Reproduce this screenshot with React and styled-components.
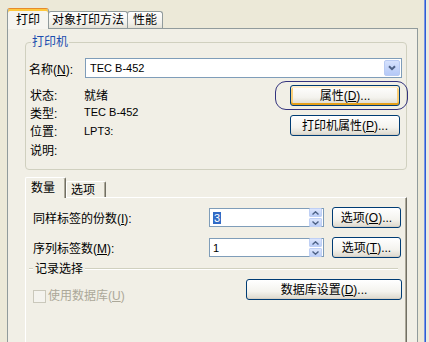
import { Fragment } from 'react';
import styled, { createGlobalStyle } from 'styled-components';

const GlobalStyle = createGlobalStyle`
  html, body {
    margin: 0;
    padding: 0;
  }
  body {
    width: 429px;
    height: 342px;
    overflow: hidden;
    background: #ECE9D8;
    font-family: "Liberation Sans", "Noto Sans CJK SC", sans-serif;
    font-size: 12px;
    color: #000;
  }
`;

const Window = styled.div`
  width: 429px;
  height: 342px;
  display: flex;
  background: #ECE9D8;
  overflow: hidden;
`;

const Dialog = styled.div`
  width: 424px;
  padding: 7px 6px 0 7px;
  box-sizing: border-box;
  display: flex;
  flex-direction: column;
`;

const WindowEdge = styled.div`
  flex: 1;
  border-left: 1px solid #7A96DF;
  background: linear-gradient(to right, #2E5DD7 0, #2E5DD7 1px, #EDEBE0 1px);
`;

const TabStrip = styled.div`
  display: flex;
  align-items: flex-end;
  height: 21px;
`;

const TopTab = styled.div`
  position: relative;
  z-index: ${p => (p.$active ? 2 : 1)};
  height: ${p => (p.$active ? 21 : 17)}px;
  margin-bottom: ${p => (p.$active ? -1 : 0)}px;
  padding: 0 ${p => p.$pad}px;
  box-sizing: border-box;
  border: 1px solid #919B9C;
  border-bottom: none;
  border-top-color: ${p => (p.$active ? '#E68B2C' : '#919B9C')};
  border-radius: 3px 3px 0 0;
  background: ${p => (p.$active ? '#F6F5F0' : 'linear-gradient(#FFFFFF, #F1F0EA 70%, #E3E1D6)')};
  box-shadow: ${p => (p.$active ? 'inset 0 2px 0 #FFC83C' : 'none')};
  display: flex;
  align-items: center;
  line-height: 14px;
  padding-top: ${p => (p.$active ? 2 : 0)}px;
  margin-left: ${p => (p.$first ? 0 : -1)}px;
`;

const Panel = styled.div`
  flex: 1;
  border: 1px solid #919B9C;
  border-bottom: none;
  background: #F1EFE6;
  padding: 6px 10px 0 17px;
  display: flex;
  flex-direction: column;
`;

const GroupBox = styled.fieldset`
  margin: 0;
  padding: 9px 4px 11px 3px;
  border: 1px solid #D0D0BF;
  border-radius: 4px;
  min-width: 0;
`;

const GroupTitle = styled.legend`
  margin-left: 2px;
  padding: 0 1px;
  line-height: 14px;
  color: #1B4EAF;
`;

const NameRow = styled.div`
  display: grid;
  grid-template-columns: 56px 1fr;
  align-items: center;
`;

const Combo = styled.div`
  height: 20px;
  box-sizing: border-box;
  border: 1px solid #7F9DB9;
  background: #fff;
  display: flex;
  align-items: center;
  padding: 1px 1px 1px 4px;
`;

const ComboText = styled.span`
  flex: 1;
  font-size: 11px;
`;

const DropButton = styled.div`
  width: 16px;
  height: 16px;
  box-sizing: border-box;
  border: 1px solid #B9CBF3;
  border-radius: 2px;
  background: linear-gradient(#D6E2FD, #B5C9F7);
  display: flex;
  align-items: center;
  justify-content: center;
`;

const InfoArea = styled.div`
  margin-top: 7px;
  display: grid;
  grid-template-columns: 1fr auto;
`;

const InfoList = styled.div`
  display: grid;
  grid-template-columns: 54px 1fr;
  grid-auto-rows: 18.3px;
  align-items: center;
  padding-left: 1px;
`;

const InfoValue = styled.span`
  font-size: ${p => (p.$latin ? 11 : 12)}px;
`;

const ButtonColumn = styled.div`
  display: flex;
  flex-direction: column;
  gap: 9px;
  margin-right: 2px;
`;

const FocusRing = styled.div`
  margin: -4px -8px -4px -15px;
  padding: 3px 7px 3px 14px;
  border: 1px solid #33337E;
  border-radius: 11px;
`;

const Button = styled.div`
  width: ${p => p.$w}px;
  height: 21px;
  box-sizing: border-box;
  border: 1px solid #003C74;
  border-radius: 3px;
  background: linear-gradient(#FFFFFF, #F4F3EE 60%, #DCD8CC);
  box-shadow: ${p => (p.$hot
    ? 'inset 0 2px 0 #FFF0CF, inset 0 -2px 0 #E5A01A, inset 2px 0 0 #FBD07A, inset -2px 0 0 #FBD07A'
    : 'inset 0 -1px 0 #D6D0C5')};
  display: flex;
  align-items: center;
  justify-content: center;
  line-height: 14px;
  white-space: nowrap;
`;

const SubTabStrip = styled.div`
  margin-top: 7px;
  display: flex;
  align-items: flex-end;
  height: 20px;
`;

const SubTab = styled.div`
  position: relative;
  z-index: ${p => (p.$active ? 2 : 1)};
  width: ${p => p.$w}px;
  height: ${p => (p.$active ? 21 : 16)}px;
  margin-bottom: ${p => (p.$active ? -1 : 0)}px;
  box-sizing: border-box;
  border-top: 1px solid #FFFFFF;
  border-left: 1px solid #FFFFFF;
  border-right: 1px solid #716F64;
  box-shadow: inset -1px 0 0 #ACA899;
  border-radius: 2px 2px 0 0;
  background: #F1EFE6;
  padding-left: ${p => p.$pad}px;
  display: flex;
  align-items: center;
  line-height: 14px;
`;

const SubPanel = styled.div`
  flex: 1;
  border-top: 1px solid #FFFFFF;
  border-left: 1px solid #FFFFFF;
  border-right: 1px solid #716F64;
  box-shadow: inset -1px 0 0 #ACA899;
  padding: 9px 4px 0 7px;
  display: flex;
  flex-direction: column;
`;

const FieldRow = styled.div`
  display: grid;
  grid-template-columns: 168px 115px 69px;
  column-gap: 8px;
  align-items: center;
  margin-bottom: ${p => p.$gap || 0}px;
`;

const SpinBox = styled.div`
  height: 19px;
  box-sizing: border-box;
  border: 1px solid #7F9DB9;
  background: #fff;
  display: flex;
  align-items: center;
  padding: 0 1px 0 3px;
  font-size: 11px;
`;

const SpinValue = styled.span`
  flex: 1;
`;

const Selected = styled.span`
  background: #316AC5;
  color: #fff;
  padding: 0 1px;
`;

const SpinButtons = styled.div`
  display: flex;
  flex-direction: column;
  gap: 1px;
  width: 13px;
`;

const SpinArrow = styled.div`
  height: 7px;
  border: 1px solid #BFD0F5;
  border-radius: 1px;
  background: linear-gradient(#DCE6FD, #BCCEF8);
  display: flex;
  align-items: center;
  justify-content: center;
`;

const Separator = styled.div`
  margin: 4px 4px 0 -4px;
  display: flex;
  align-items: center;
  gap: 2px;
  line-height: 14px;
`;

const EtchedLine = styled.div`
  flex: ${p => (p.$short ? '0 0 4px' : 1)};
  height: 0;
  border-top: 1px solid #D0D0BF;
  border-bottom: 1px solid #FFFFFF;
`;

const RecordRow = styled.div`
  margin-top: 3px;
  display: flex;
  justify-content: space-between;
  align-items: flex-start;
`;

const CheckLabel = styled.label`
  margin-top: 10px;
  display: flex;
  align-items: center;
  gap: 2px;
  color: #ACA899;
  line-height: 14px;
`;

const CheckBox = styled.span`
  width: 13px;
  height: 13px;
  box-sizing: border-box;
  border: 1px solid #CAC8BB;
  background: #F4F3EE;
`;

const Mn = ({ c }) => (
  <span>(<u>{c}</u>)</span>
);

const Chevron = ({ up }) => (
  <svg width="7" height="4" viewBox="0 0 7 4">
    <path
      d={up ? 'M0.5 3.5 L3.5 0.8 L6.5 3.5' : 'M0.5 0.5 L3.5 3.2 L6.5 0.5'}
      fill="none"
      stroke="#4D6185"
      strokeWidth="1.4"
    />
  </svg>
);

const infoRows = [
  { label: '状态:', value: '就绪' },
  { label: '类型:', value: 'TEC B-452', latin: true },
  { label: '位置:', value: 'LPT3:', latin: true },
  { label: '说明:', value: '' },
];

function Spin({ children }) {
  return (
    <SpinBox>
      <SpinValue>{children}</SpinValue>
      <SpinButtons>
        <SpinArrow><Chevron up /></SpinArrow>
        <SpinArrow><Chevron /></SpinArrow>
      </SpinButtons>
    </SpinBox>
  );
}

export default function App() {
  return (
    <Window>
      <GlobalStyle />
      <Dialog>
        <TabStrip>
          <TopTab $active $first $pad={8}>打印</TopTab>
          <TopTab $pad={3}>对象打印方法</TopTab>
          <TopTab $pad={5}>性能</TopTab>
        </TabStrip>
        <Panel>
          <GroupBox>
            <GroupTitle>打印机</GroupTitle>
            <NameRow>
              <span>名称<Mn c="N" />:</span>
              <Combo>
                <ComboText>TEC B-452</ComboText>
                <DropButton>
                  <svg width="8" height="6" viewBox="0 0 8 6">
                    <path d="M1 1.2 L4 4.2 L7 1.2" fill="none" stroke="#4D6185" strokeWidth="2" />
                  </svg>
                </DropButton>
              </Combo>
            </NameRow>
            <InfoArea>
              <InfoList>
                {infoRows.map(({ label, value, latin }) => (
                  <Fragment key={label}>
                    <span>{label}</span>
                    <InfoValue $latin={latin}>{value}</InfoValue>
                  </Fragment>
                ))}
              </InfoList>
              <ButtonColumn>
                <FocusRing>
                  <Button $w={110} $hot>属性<Mn c="D" />...</Button>
                </FocusRing>
                <Button $w={110}>打印机属性<Mn c="P" />...</Button>
              </ButtonColumn>
            </InfoArea>
          </GroupBox>

          <SubTabStrip>
            <SubTab $active $w={41} $pad={5}>数量</SubTab>
            <SubTab $w={40} $pad={4}>选项</SubTab>
          </SubTabStrip>
          <SubPanel>
            <FieldRow $gap={9}>
              <span>同样标签的份数<Mn c="I" />:</span>
              <Spin><Selected>3</Selected></Spin>
              <Button $w={69}>选项<Mn c="O" />...</Button>
            </FieldRow>
            <FieldRow>
              <span>序列标签数<Mn c="M" />:</span>
              <Spin>1</Spin>
              <Button $w={69}>选项<Mn c="T" />...</Button>
            </FieldRow>
            <Separator>
              <EtchedLine $short />
              <span>记录选择</span>
              <EtchedLine />
            </Separator>
            <RecordRow>
              <CheckLabel>
                <CheckBox />
                <span>使用数据库<Mn c="U" /></span>
              </CheckLabel>
              <Button $w={156}>数据库设置<Mn c="D" />...</Button>
            </RecordRow>
          </SubPanel>
        </Panel>
      </Dialog>
      <WindowEdge />
    </Window>
  );
}
